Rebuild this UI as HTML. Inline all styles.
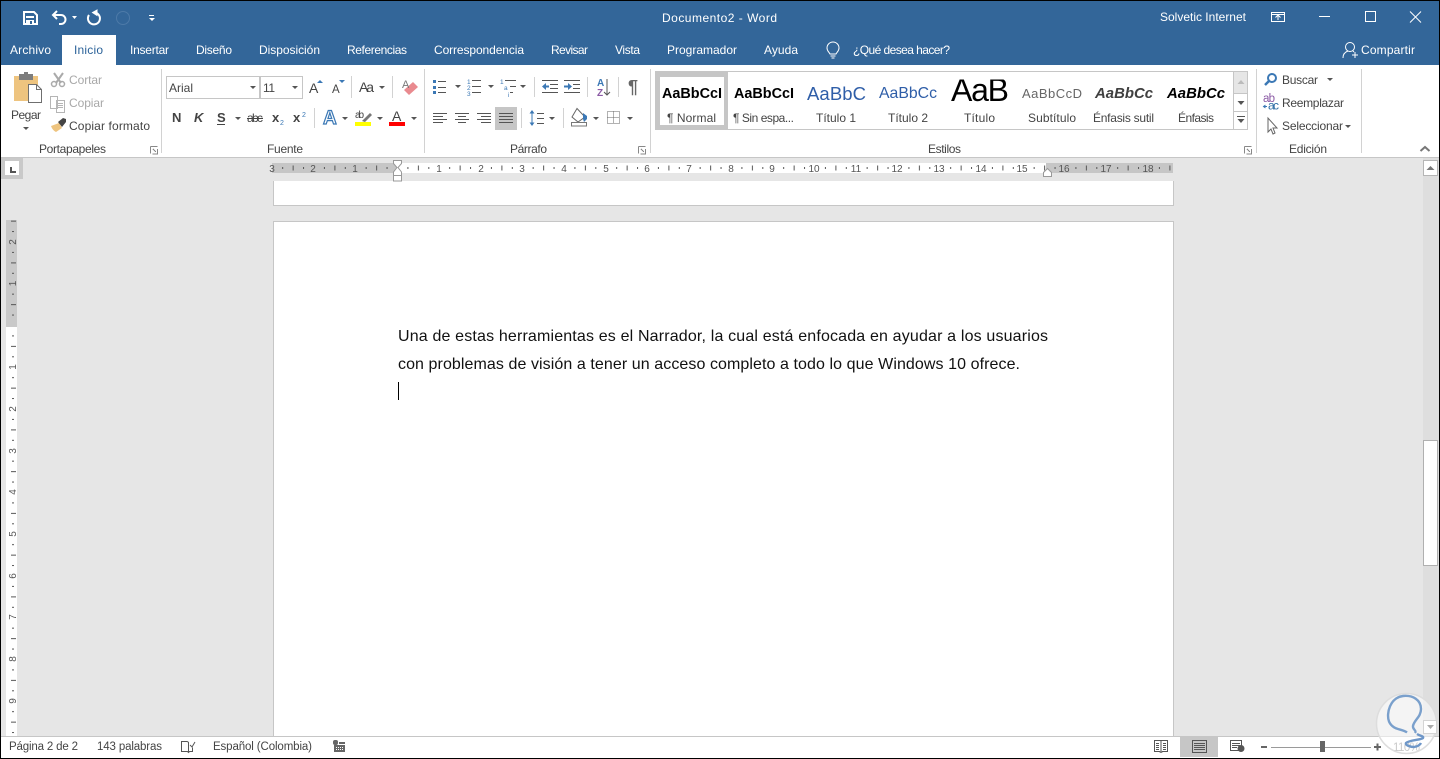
<!DOCTYPE html>
<html lang="es"><head><meta charset="utf-8"><title>Documento2 - Word</title>
<style>
html,body{margin:0;padding:0;width:1440px;height:759px;overflow:hidden;background:#e6e6e6}
svg{display:block;position:absolute;left:0;top:0}
text{font-family:"Liberation Sans",Arial,sans-serif;font-size:12px;fill:#444;white-space:pre}
.w text{fill:#fff}
.g text{fill:#a8a8a8}
.r text{font-size:10px;fill:#555;text-anchor:middle}
.l{fill:none;stroke:#555;stroke-width:1}
.c{shape-rendering:crispEdges}
</style></head><body>
<svg width="1440" height="759" viewBox="0 0 1440 759" xmlns="http://www.w3.org/2000/svg">
<defs>
<pattern id="tk" x="397" y="163" width="41.75" height="10" patternUnits="userSpaceOnUse">
<rect x="10.4" y="4" width="1" height="2" fill="#555"/><rect x="20.9" y="2.5" width="1" height="5" fill="#555"/><rect x="31.3" y="4" width="1" height="2" fill="#555"/>
</pattern>
<pattern id="tv" x="6" y="325" width="11" height="41.75" patternUnits="userSpaceOnUse">
<rect x="6" y="10.4" width="2" height="1" fill="#555"/><rect x="5" y="20.9" width="5" height="1" fill="#555"/><rect x="6" y="31.3" width="2" height="1" fill="#555"/>
</pattern>
<clipPath id="cg"><rect x="657" y="79.500" width="577" height="50"/></clipPath>
</defs>

<!-- base -->
<rect class="c" width="1440" height="759" fill="#e6e6e6"/>
<rect class="c" width="1440" height="65" fill="#336699"/>
<rect class="c" y="65" width="1440" height="92" fill="#fff"/>
<rect class="c" y="157" width="1440" height="1" fill="#c6c6c6"/>
<rect class="c" x="62" y="35" width="54" height="30" fill="#fff"/>

<!-- document -->
<rect class="c" x="273.5" y="170.5" width="900" height="35" fill="#fff" stroke="#c6c6c6"/>
<rect class="c" x="273.5" y="221.5" width="900" height="530" fill="#fff" stroke="#c6c6c6"/>
<text x="398" y="341" textLength="650" style="font-size:16px;fill:#111">Una de estas herramientas es el Narrador, la cual está enfocada en ayudar a los usuarios</text>
<text x="398" y="369" textLength="622" style="font-size:16px;fill:#111">con problemas de visión a tener un acceso completo a todo lo que Windows 10 ofrece.</text>
<rect class="c" x="398" y="382" width="1" height="18" fill="#000"/>

<!-- horizontal ruler -->
<rect class="c" x="0" y="158" width="1423" height="23" fill="#e6e6e6"/>
<rect class="c" x="272" y="163" width="125" height="10" fill="#c6c6c6"/>
<rect class="c" x="397" y="163" width="649" height="10" fill="#fff"/>
<rect class="c" x="1046" y="163" width="127" height="10" fill="#c6c6c6"/>
<rect class="c" x="272" y="163" width="901" height="10" fill="url(#tk)"/>
<g class="r">
<text x="272" y="172">3</text><text x="313" y="172">2</text><text x="355" y="172">1</text>
<text x="439" y="172">1</text><text x="481" y="172">2</text><text x="522" y="172">3</text><text x="564" y="172">4</text><text x="606" y="172">5</text><text x="647" y="172">6</text><text x="689" y="172">7</text><text x="731" y="172">8</text><text x="772" y="172">9</text><text x="814" y="172">10</text><text x="856" y="172">11</text><text x="897" y="172">12</text><text x="939" y="172">13</text><text x="981" y="172">14</text><text x="1022" y="172">15</text><text x="1064" y="172">16</text><text x="1106" y="172">17</text><text x="1148" y="172">18</text>
</g>
<path d="M393.5 160.5h8v3l-3.5 4 3.5 4.5v3.5h-8v-3.5l3.5-4.5-3.5-4z" fill="#fff" stroke="#999"/>
<rect class="c" x="393.5" y="175.5" width="8" height="5.5" fill="#fff" stroke="#999"/>
<path d="M1043.5 176.5v-4l4-4 4 4v4z" fill="#fff" stroke="#999"/>

<!-- corner tab -->
<rect class="c" x="1" y="158" width="22" height="21" fill="#c9c9c9"/>
<rect class="c" x="5" y="161" width="14" height="14" fill="#fff"/>
<path class="c" d="M10 167h2v4h4v2h-6z" fill="#555"/>

<!-- vertical ruler -->
<rect class="c" x="6" y="220" width="11" height="107" fill="#c9c9c9"/>
<rect class="c" x="6" y="327" width="11" height="410" fill="#fff"/>
<rect class="c" x="6" y="220" width="11" height="517" fill="url(#tv)"/>
<g class="r">
<text transform="translate(16 242) rotate(-90)">2</text><text transform="translate(16 283.5) rotate(-90)">1</text>
<text transform="translate(16 367) rotate(-90)">1</text><text transform="translate(16 409) rotate(-90)">2</text><text transform="translate(16 451) rotate(-90)">3</text><text transform="translate(16 492) rotate(-90)">4</text><text transform="translate(16 534) rotate(-90)">5</text><text transform="translate(16 576) rotate(-90)">6</text><text transform="translate(16 617) rotate(-90)">7</text><text transform="translate(16 659) rotate(-90)">8</text><text transform="translate(16 701) rotate(-90)">9</text>
</g>

<!-- scrollbar -->
<rect class="c" x="1423" y="158" width="16" height="579" fill="#dedede"/>
<rect class="c" x="1423.5" y="160.5" width="14" height="15" fill="#fff" stroke="#b5b5b5"/>
<path d="M1426.5 170l4-4 4 4z" fill="#777"/>
<rect class="c" x="1423.5" y="440.5" width="14" height="125" fill="#fff" stroke="#b0b0b0"/>

<!-- status bar -->
<rect class="c" y="736" width="1440" height="22" fill="#fff"/>
<rect class="c" y="736" width="1440" height="1" fill="#c6c6c6"/>
<text x="9" y="750" textLength="69" style="font-size:11.5px">Página 2 de 2</text>
<text x="97" y="750" textLength="65" style="font-size:11.5px">143 palabras</text>
<text x="213" y="750" textLength="99" style="font-size:11.5px">Español (Colombia)</text>
<path class="l" d="M187.500 741.500h-6v10h6l1 1 1-1h3v-4M187.500 741.500l1 1v10M190 745l2 2 3-5"/>
<rect x="333" y="740" width="5" height="5" rx="2" fill="#666"/>
<path class="c" d="M339 742h6v2h-6zM334 745h11v7h-11z" fill="#666"/>
<path class="c" d="M336 747h1v1h-1zM338 747h1v1h-1zM340 747h1v1h-1zM342 747h1v1h-1zM336 749h1v1h-1zM338 749h1v1h-1zM340 749h1v1h-1zM342 749h1v1h-1z" fill="#fff"/>
<rect class="c" x="1180" y="737" width="38" height="20" fill="#c6c6c6"/>
<path class="l c" d="M1154.500 740.500h13v11h-5l-1.500 1-1.500-1h-5zM1161 740.500v11M1156 743.500h3M1156 745.500h3M1156 747.500h3M1156 749.500h3M1163 743.500h3M1163 745.500h3M1163 747.500h3M1163 749.500h3"/>
<path class="l c" d="M1192.500 740.500h14v12h-14zM1194 743.500h11M1194 745.500h11M1194 747.500h11M1194 749.500h11"/>
<path class="l c" d="M1240.500 750.500h-10v-10h11v6M1232 743.500h8M1232 745.500h8M1232 747.500h5"/>
<circle cx="1241" cy="748.500" r="3.500" fill="#555"/>
<rect class="c" x="1261" y="746" width="6" height="2" fill="#666"/>
<rect class="c" x="1271" y="747" width="100" height="1" fill="#9a9a9a"/>
<rect class="c" x="1320" y="741" width="5" height="11" fill="#666"/>
<path class="c" d="M1374 746h7v2h-7zM1376.500 743.500h2v7h-2z" fill="#666"/>
<rect class="c" y="758" width="1440" height="1" fill="#000"/>
<rect class="c" x="0" y="0" width="1" height="759" fill="#000"/>
<rect class="c" x="1439" y="0" width="1" height="759" fill="#000"/>
<rect class="c" x="0" y="0" width="1440" height="1" fill="#000"/>

<!-- title bar -->
<g class="w">
<text x="662" y="22" textLength="115">Documento2 - Word</text>
<text x="1160" y="21" textLength="86">Solvetic Internet</text>
<text x="10" y="54" textLength="41">Archivo</text>
<text x="130" y="54" textLength="39">Insertar</text>
<text x="196" y="54" textLength="36">Diseño</text>
<text x="259" y="54" textLength="61">Disposición</text>
<text x="347" y="54" textLength="60">Referencias</text>
<text x="434" y="54" textLength="90">Correspondencia</text>
<text x="551" y="54" textLength="37">Revisar</text>
<text x="615" y="54" textLength="25">Vista</text>
<text x="667" y="54" textLength="70">Programador</text>
<text x="764" y="54" textLength="34">Ayuda</text>
<text x="853" y="54" textLength="97">¿Qué desea hacer?</text>
<text x="1361" y="54" textLength="54">Compartir</text>
</g>
<text x="74" y="54" textLength="29" style="fill:#2b6299">Inicio</text>

<!-- QAT -->
<path d="M24 12h10l3 3v9h-13z" fill="none" stroke="#fff" stroke-width="2"/>
<path class="c" d="M26 16h8v2h-8zM26 20h8v5h-8z" fill="#fff"/>
<path class="c" d="M30 21h2v3h-2z" fill="#336699"/>
<path d="M57 11l-4 4 4 4M53 15h8a4 4 0 0 1 0 9h-2" fill="none" stroke="#fff" stroke-width="2"/>
<path d="M72 16h5l-2.5 3z" fill="#fff"/>
<path d="M95 12.500a6 6 0 1 1-6 2.500" fill="none" stroke="#fff" stroke-width="2"/><path d="M97 10l-4.500 2.500 4.500 3z" fill="#fff" stroke="#fff"/>
<circle cx="123" cy="18" r="6.5" fill="none" stroke="#4d7aa8" stroke-width="1"/>
<path class="c" d="M149 15h5v1h-5z" fill="#fff"/><path d="M149 18h6l-3 3z" fill="#fff"/>

<!-- window controls -->
<path class="c" d="M1271.5 12.5h13v9h-13zM1271.5 14.5h13" fill="none" stroke="#fff"/>
<path d="M1278 20v-4M1275.5 17.5l2.5-2.5 2.5 2.5" fill="none" stroke="#fff"/>
<rect class="c" x="1319" y="16" width="11" height="1" fill="#fff"/>
<rect class="c" x="1365.5" y="11.5" width="10" height="10" fill="none" stroke="#fff"/>
<path d="M1410 11.5l11 11M1421 11.5l-11 11" stroke="#fff" fill="none"/>

<!-- bulb & person -->
<path d="M830 54c-1-2-3-3-3-6a6 6 0 0 1 12 0c0 3-2 4-3 6zM830.5 56h5M831.5 58h3" fill="none" stroke="#fff"/>
<circle cx="1350" cy="47" r="4.5" fill="none" stroke="#fff"/>
<path d="M1343 58c0-4 2-6 5-7M1353 51l1 1M1352 55h6M1355 52v6" fill="none" stroke="#fff"/>

<!-- separators -->
<path class="c" d="M161.5 69v84M424.5 69v84M650.5 69v84M1256.5 69v84M1361.5 69v84" stroke="#d2d2d2"/>
<path class="c" d="M351.500 76v22M392.500 76v22M314.500 108v20M534.500 77v20M587.500 77v20M618.500 77v20M521.500 108v20M563.500 108v20" stroke="#d2d2d2"/>

<!-- clipboard -->
<rect class="c" x="14" y="76" width="24" height="25" fill="#eec47f"/>
<path class="c" d="M19 74h14v6h-14z" fill="#7d7d7d"/><path class="c" d="M24 72h4v3h-4z" fill="#7d7d7d"/>
<path d="M28.5 84.500h8l5 5v13h-13z" fill="#fff" stroke="#6f6f6f"/><path d="M36.500 84.500v5h5" fill="none" stroke="#6f6f6f"/>
<text x="11" y="119" textLength="30">Pegar</text>
<path d="M23 127h6l-3 3z" fill="#555"/>
<path d="M54 73l7 10M63 73l-7 10" stroke="#aaa" stroke-width="2" fill="none"/>
<circle cx="54" cy="84" r="2.500" fill="none" stroke="#aaa" stroke-width="1.500"/><circle cx="62" cy="84" r="2.500" fill="none" stroke="#aaa" stroke-width="1.500"/>
<path class="c" d="M50.500 96.500h7v12h-7zM56.500 100.500h8v12h-8z" fill="#fff" stroke="#b5b5b5"/>
<path class="c" d="M58 103.500h5M58 105.500h5M58 107.500h5" stroke="#b5b5b5"/>
<g class="g"><text x="69" y="84" textLength="33">Cortar</text><text x="69" y="107" textLength="35">Copiar</text></g>
<text x="69" y="130" textLength="81">Copiar formato</text>
<path d="M51 126l8-3 3 5-6 4c-2-1-4-3-5-6z" fill="#eec47f"/><path d="M58 122l5-4 3 1 0 3-4 5z" fill="#444"/>
<text x="39" y="153" textLength="67">Portapapeles</text>
<path class="c" d="M150.500 146.500h7M150.500 146.500v7M153 149l3 3M157.500 149v5h-5" fill="none" stroke="#888"/>

<!-- font -->
<rect class="c" x="166.500" y="76.500" width="93" height="22" fill="#fff" stroke="#c6c6c6"/>
<rect class="c" x="260.500" y="76.500" width="42" height="22" fill="#fff" stroke="#c6c6c6"/>
<text x="169" y="92" textLength="24">Arial</text>
<text x="263" y="92" textLength="12">11</text>
<path d="M250 86h6l-3 3zM292 86h6l-3 3z" fill="#555"/>
<text x="309" y="93" style="font-size:14px">A</text><path d="M317 83h6l-3-3z" fill="#3b78b5"/>
<text x="332" y="93" style="font-size:11.5px">A</text><path d="M339 80h6l-3 3z" fill="#3b78b5"/>
<text x="359" y="92" style="font-size:14px" textLength="15">Aa</text><path d="M379 86h6l-3 3z" fill="#555"/>
<path d="M404 90l9-8 5 5-9 8z" fill="#e98a8f"/><text x="402" y="88" style="font-size:11px;fill:#777">A</text>
<text x="172" y="122" style="font-weight:bold;font-size:13px" textLength="9">N</text>
<text x="194" y="122" style="font-weight:bold;font-style:italic;font-size:13px" textLength="9">K</text>
<text x="217" y="122" style="font-weight:bold;font-size:13px" textLength="8">S</text><rect class="c" x="217" y="124" width="8" height="1" fill="#444"/>
<path d="M235 117h6l-3 3z" fill="#555"/>
<text x="247" y="122" style="font-size:12px" textLength="16">abc</text><rect class="c" x="247" y="118" width="16" height="1" fill="#444"/>
<text x="272" y="122" style="font-weight:bold;font-size:13px" textLength="7">x</text><text x="280" y="125" style="font-size:7px;fill:#3b78b5">2</text>
<text x="293" y="122" style="font-weight:bold;font-size:13px" textLength="7">x</text><text x="302" y="117" style="font-size:7px;fill:#3b78b5">2</text>
<text x="323" y="124" style="font-size:19px;font-weight:bold;fill:#fff;stroke:#3b78b5;stroke-width:1.200" textLength="14">A</text>
<path d="M342 117h6l-3 3zM377 117h6l-3 3zM411 117h6l-3 3z" fill="#555"/>
<text x="355" y="118" style="font-size:10px" textLength="9">ab</text>
<path d="M362 121l8-8 2 2-7 7z" fill="#777"/>
<rect class="c" x="355" y="122" width="16" height="4" fill="#ff0"/>
<text x="392" y="121" style="font-size:14px">A</text>
<rect class="c" x="389" y="122" width="16" height="4" fill="#f00"/>
<text x="267" y="153" textLength="36">Fuente</text>

<!-- paragraph -->
<g class="c">
<rect x="433" y="80" width="3" height="3" fill="#3b78b5"/><rect x="433" y="86" width="3" height="3" fill="#3b78b5"/><rect x="433" y="91" width="3" height="3" fill="#3b78b5"/>
<path d="M438 81.500h8M438 87.500h8M438 92.500h8" stroke="#555"/>
<path d="M472 80.500h9M472 86.500h9M472 92.500h9" stroke="#555"/>
<path d="M505 80.500h11M510 86.500h6M510 92.500h3" stroke="#555"/>
</g>
<path d="M455 85h6l-3 3zM488 85h6l-3 3zM520 85h6l-3 3z" fill="#555"/>
<text x="467" y="84" style="font-size:6.500px;fill:#3b78b5">1</text><text x="467" y="90" style="font-size:6.500px;fill:#3b78b5">2</text><text x="467" y="96" style="font-size:6.500px;fill:#3b78b5">3</text>
<text x="500" y="84" style="font-size:6.500px;fill:#3b78b5">1</text><text x="504" y="90" style="font-size:6.500px;fill:#3b78b5">a</text><text x="508" y="97" style="font-size:6.500px;fill:#3b78b5">i</text>
<path class="c" d="M542 80.500h16M550 84.500h8M550 88.500h8M542 92.500h16M564 80.500h16M573 84.500h7M573 88.500h7M564 92.500h16" stroke="#555"/>
<path d="M542 86.500l4-3.500v2.500h3v2h-3v2.500z" fill="#3b78b5"/><path d="M572 86.500l-4-3.500v2.500h-4v2h4v2.500z" fill="#3b78b5"/>
<text x="597" y="86" style="font-size:10px;font-weight:bold;fill:#3b78b5">A</text><text x="597" y="96" style="font-size:10px;font-weight:bold;fill:#8b5aa5">Z</text>
<path d="M607 79v16M604 92l3 3 3-3" fill="none" stroke="#555"/>
<text x="628" y="93" style="font-size:18px;font-weight:bold;fill:#666">¶</text>
<rect class="c" x="495" y="107" width="22" height="23" fill="#c6c6c6"/>
<g class="c" stroke="#555">
<path d="M433 113.500h14M433 116.500h10M433 119.500h14M433 122.500h10"/>
<path d="M455 113.500h14M458 116.500h8M455 119.500h14M458 122.500h8"/>
<path d="M477 113.500h14M481 116.500h10M477 119.500h14M481 122.500h10"/>
<path d="M499 113.500h14M499 116.500h14M499 119.500h14M499 122.500h14"/>
<path d="M537 113.500h7M537 118.500h7M537 123.500h7"/>
</g>
<path d="M532 110l-2.500 3.500h5zM532 126l-2.500-3.500h5z" fill="#3b78b5"/><path d="M532 113v10" stroke="#3b78b5"/>
<path d="M549 117h6l-3 3zM593 117h6l-3 3zM627 117h6l-3 3z" fill="#555"/>
<path d="M577 108.500l-5 8.500 6 5 7-5z" fill="#fff" stroke="#666"/><path d="M583 113l4 3v3l-3 3-1-3z" fill="#3b78b5"/>
<rect x="571.500" y="122.500" width="15" height="3.500" fill="#fff" stroke="#777"/>
<path class="c" d="M607.500 111.500h12v12h-12zM613.500 111.500v12M607.500 117.500h12" fill="none" stroke="#666" stroke-dasharray="1 1"/>
<text x="510" y="153" textLength="37">Párrafo</text>
<path class="c" d="M638.500 146.500h7M638.500 146.500v7M641 149l3 3M645.500 149v5h-5" fill="none" stroke="#888"/>

<!-- styles gallery -->
<rect class="c" x="655.500" y="71.500" width="592" height="58" fill="#fff" stroke="#c6c6c6"/>
<rect class="c" x="656" y="72" width="72" height="58" fill="#c6c6c6"/>
<rect class="c" x="660" y="77" width="64" height="48" fill="#fff"/>
<g clip-path="url(#cg)">
<text x="662" y="98" textLength="60" style="font-size:14.400px;font-weight:bold;fill:#000">AaBbCcI</text>
<text x="734" y="98" textLength="60" style="font-size:14.400px;font-weight:bold;fill:#000">AaBbCcI</text>
<text x="807" y="100" textLength="59" style="font-size:18.500px;fill:#2f5ea8">AaBbC</text>
<text x="879" y="98" textLength="58" style="font-size:15.800px;fill:#2f5ea8">AaBbCc</text>
<text x="951" y="101" textLength="58" style="font-size:32px;fill:#000">AaB</text>
<text x="1022" y="98" textLength="60" style="font-size:13px;fill:#666">AaBbCcD</text>
<text x="1095" y="98" textLength="58" style="font-size:14.900px;font-weight:bold;font-style:italic;fill:#404040">AaBbCc</text>
<text x="1167" y="98" textLength="58" style="font-size:14.900px;font-weight:bold;font-style:italic;fill:#000">AaBbCc</text>
</g>
<text x="667" y="122" textLength="49">¶ Normal</text>
<text x="733" y="122" textLength="61">¶ Sin espa...</text>
<text x="816" y="122" textLength="40">Título 1</text>
<text x="888" y="122" textLength="40">Título 2</text>
<text x="964" y="122" textLength="31">Título</text>
<text x="1028" y="122" textLength="48">Subtítulo</text>
<text x="1093" y="122" textLength="61">Énfasis sutil</text>
<text x="1178" y="122" textLength="36">Énfasis</text>
<rect class="c" x="1234" y="72" width="13" height="21" fill="#e6e6e6"/>
<path class="c" d="M1233.500 72v58M1234 93.500h13M1234 111.500h13" stroke="#c6c6c6"/>
<path d="M1237.500 84l3.500-4 3.500 4z" fill="#bbb"/>
<path d="M1237.500 101h7l-3.500 4z" fill="#555"/>
<path class="c" d="M1237 116.500h8" stroke="#555"/><path d="M1237.500 119h7l-3.500 4z" fill="#555"/>
<text x="928" y="153" textLength="33">Estilos</text>
<path class="c" d="M1244.500 146.500h7M1244.500 146.500v7M1247 149l3 3M1251.500 149v5h-5" fill="none" stroke="#888"/>

<!-- editing -->
<circle cx="1272" cy="78" r="4" fill="none" stroke="#3b78b5" stroke-width="2"/><path d="M1269 81l-4 4" stroke="#3b78b5" stroke-width="2.500"/>
<text x="1282" y="84" textLength="36">Buscar</text><path d="M1327 78h6l-3 3z" fill="#555"/>
<text x="1263" y="102" style="font-size:11.500px;fill:#8b5aa5" textLength="12">ab</text>
<text x="1268" y="109.500" style="font-size:12px;fill:#2f6ea5" textLength="11">ac</text>
<path d="M1267 106.500h-3M1265.500 105l-2 1.500 2 1.500" fill="none" stroke="#3b78b5"/>
<text x="1282" y="107" textLength="62">Reemplazar</text>
<path d="M1268 118v14l3-3 2 5 2-1-2-5h4z" fill="#fff" stroke="#666"/>
<text x="1282" y="130" textLength="61">Seleccionar</text><path d="M1345 125h6l-3 3z" fill="#555"/>
<text x="1289" y="153" textLength="38">Edición</text>
<path d="M1420.500 151l4.500-4 4.500 4" fill="none" stroke="#777" stroke-width="2"/>

<!-- watermark -->
<text x="1393" y="751" textLength="27" style="font-size:11.500px;fill:#888">110%</text>
<circle cx="1406.500" cy="723.500" r="30" fill="#fff" fill-opacity=".55" stroke="#ddd" stroke-width="1.500"/>
<rect class="c" x="1423.500" y="720.500" width="13" height="13" fill="#fff" stroke="#d4d4d4"/>
<path d="M1427 725l3.500 4 3.500-4z" fill="#aaa"/>
<path d="M1407 732.500c-5-4-14-2-18-11-3-8 1-24 14-25.500 10-1 18 4 18 13 0 8-7 11-8 17-.5 4 4 4 2 7" fill="none" stroke="#7aa0cc" stroke-width="2.400"/>
<path d="M1417 734c3 2 7 2 6 4-2 2-14 2-17 5-1 2 4 4 8 4 3-.5 6-2 7-4" fill="none" stroke="#6f97c8" stroke-width="2.400"/>
</svg>
</body></html>
